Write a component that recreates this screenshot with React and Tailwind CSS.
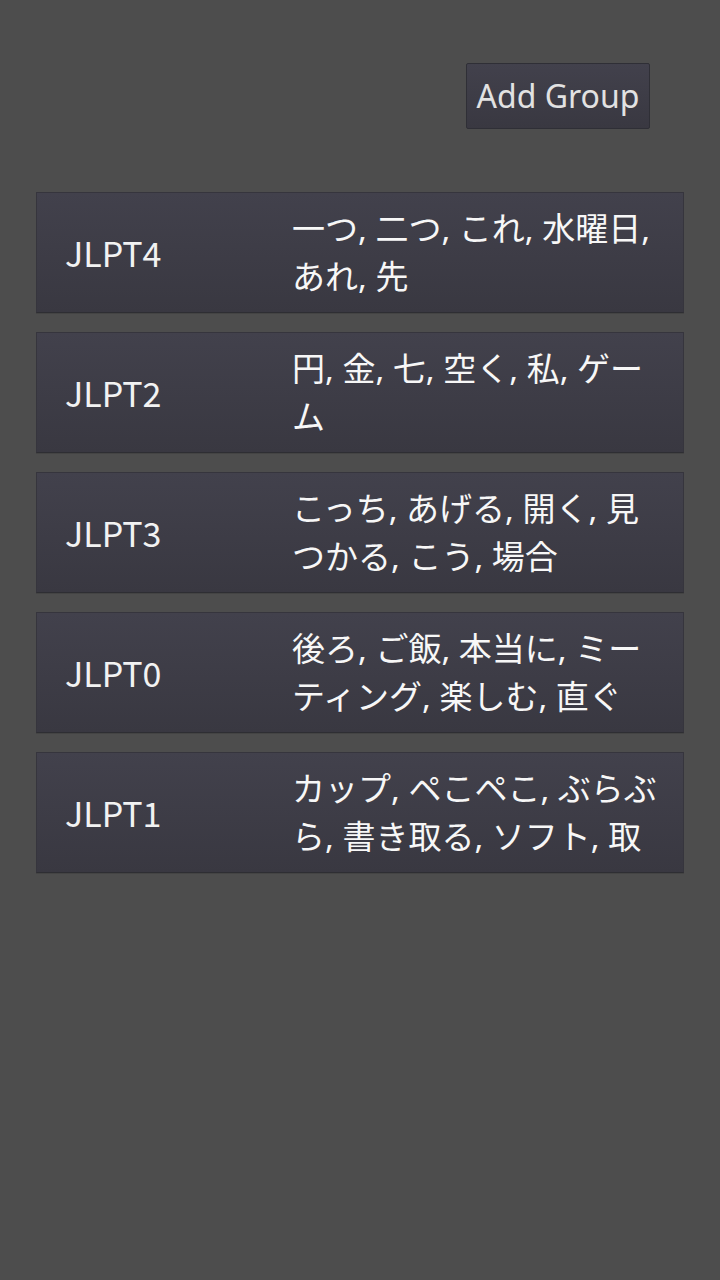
const groups = [
  { name: 'JLPT4', words: '一つ, 二つ, これ, 水曜日, あれ, 先' },
  { name: 'JLPT2', words: '円, 金, 七, 空く, 私, ゲーム' },
  { name: 'JLPT3', words: 'こっち, あげる, 開く, 見つかる, こう, 場合' },
  { name: 'JLPT0', words: '後ろ, ご飯, 本当に, ミーティング, 楽しむ, 直ぐ' },
  { name: 'JLPT1', words: 'カップ, ペこペこ, ぶらぶら, 書き取る, ソフト, 取' },
];

function GroupRow({ name, words }) {
  return (
    <div className="flex h-[121px] items-center border border-[#36353d] border-b-[#2e2e33] bg-gradient-to-b from-[#42414c] to-[#393841] shadow-[0_1px_0_#444]">
      <div className="w-[255px] shrink-0 pl-[28px] font-['Noto_Sans_CJK_JP',sans-serif] text-[34px] text-[#f2f2f2]">
        {name}
      </div>
      <div className="w-[375px] text-[33px] leading-[48px] text-[#f7f7f7]">{words}</div>
    </div>
  );
}

export default function App() {
  return (
    <div
      className="min-h-[1280px] w-[720px] bg-[#4d4d4d] pt-[63px]"
      style={{ fontFamily: '"Noto Sans", "Noto Sans CJK JP", sans-serif' }}
    >
      <div className="flex justify-end pr-[70px]">
        <button className="h-[66px] w-[184px] rounded-[2px] border border-[#2f2f36] bg-gradient-to-b from-[#42414c] to-[#393841] text-[32px] text-[#e2e2e2]">
          Add Group
        </button>
      </div>
      <div className="mt-[63px] flex flex-col gap-[19px] px-[36px]">
        {groups.map(g => (
          <GroupRow key={g.name} {...g} />
        ))}
      </div>
    </div>
  );
}
